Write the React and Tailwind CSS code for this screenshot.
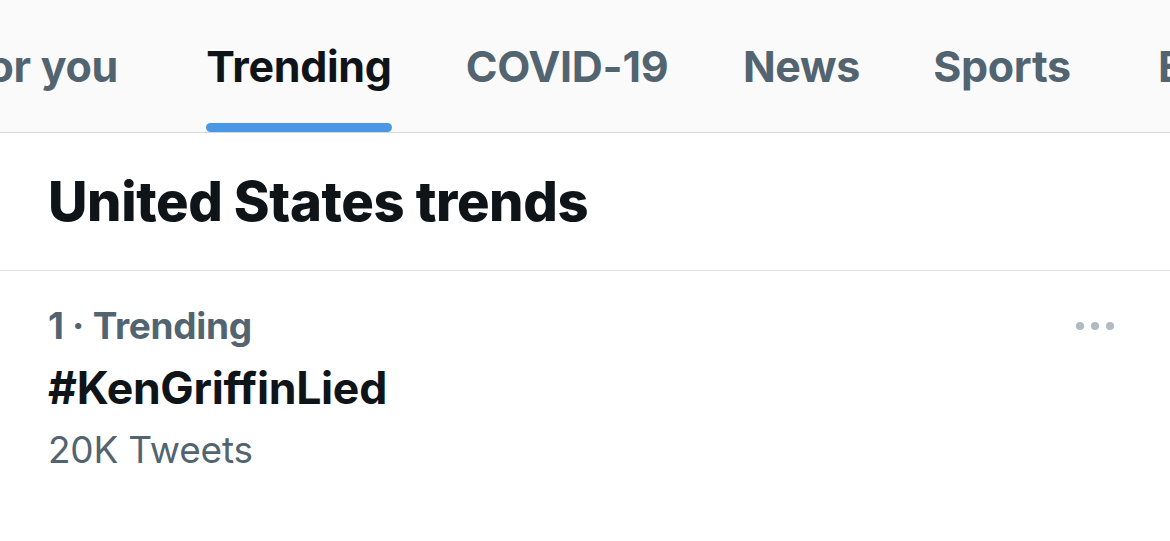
import React from "react";

const font = { fontFamily: "Inter, 'Noto Sans', sans-serif" };

export default function App() {
  return (
    <div
      className="w-[1170px] h-[541px] bg-white overflow-hidden text-[#0f1419] font-['Inter','Noto_Sans',sans-serif]"
      style={font}
    >
      {/* Tabs header */}
      <div className="h-[133px] bg-[#fafafb] border-b border-[#d6d9dc] overflow-hidden">
        <div className="flex h-[132px] items-center whitespace-nowrap text-[43px] font-bold tracking-[-0.3px] text-[#536471]">
          <div className="w-[118px] shrink-0 overflow-hidden flex justify-end">
            <span>For you</span>
          </div>
          <div className="relative ml-[88px] w-[186px] shrink-0 h-full flex items-center justify-center text-[#0f1419]">
            <span>Trending</span>
            <div className="absolute left-0 right-0 bottom-0 h-[9px] rounded-full bg-[#4a97e6]" />
          </div>
          <div className="ml-[73px] w-[204px] shrink-0 flex justify-center">
            <span>COVID-19</span>
          </div>
          <div className="ml-[76px] w-[113px] shrink-0 flex justify-center">
            <span>News</span>
          </div>
          <div className="ml-[74px] w-[140px] shrink-0 flex justify-center">
            <span>Sports</span>
          </div>
          <div className="ml-[86px] shrink-0">
            <span>Entertainment</span>
          </div>
        </div>
      </div>

      {/* Heading */}
      <div className="h-[138px] border-b border-[#dfe2e5] flex items-center px-[48px]">
        <h1 className="text-[54.3px] leading-[1.21] font-extrabold tracking-[-0.4px]">
          United States trends
        </h1>
      </div>

      {/* Trend row */}
      <div className="flex justify-between pl-[48px] pr-[56px] pt-[24px]">
        <div className="flex flex-col">
          <div className="h-[62px] leading-[62px] text-[37px] font-bold text-[#536471] tracking-[-0.3px]">
            1 · Trending
          </div>
          <div className="h-[62px] leading-[62px] text-[44.6px] font-bold tracking-[-0.3px]">
            #KenGriffinLied
          </div>
          <div className="h-[62px] leading-[62px] text-[37px] text-[#536471] tracking-[-0.2px]">
            20K Tweets
          </div>
        </div>
        <div className="flex gap-[7px] pt-[27px]">
          <span className="w-[8px] h-[8px] rounded-full bg-[#b1bac3]" />
          <span className="w-[8px] h-[8px] rounded-full bg-[#b1bac3]" />
          <span className="w-[8px] h-[8px] rounded-full bg-[#b1bac3]" />
        </div>
      </div>
    </div>
  );
}
